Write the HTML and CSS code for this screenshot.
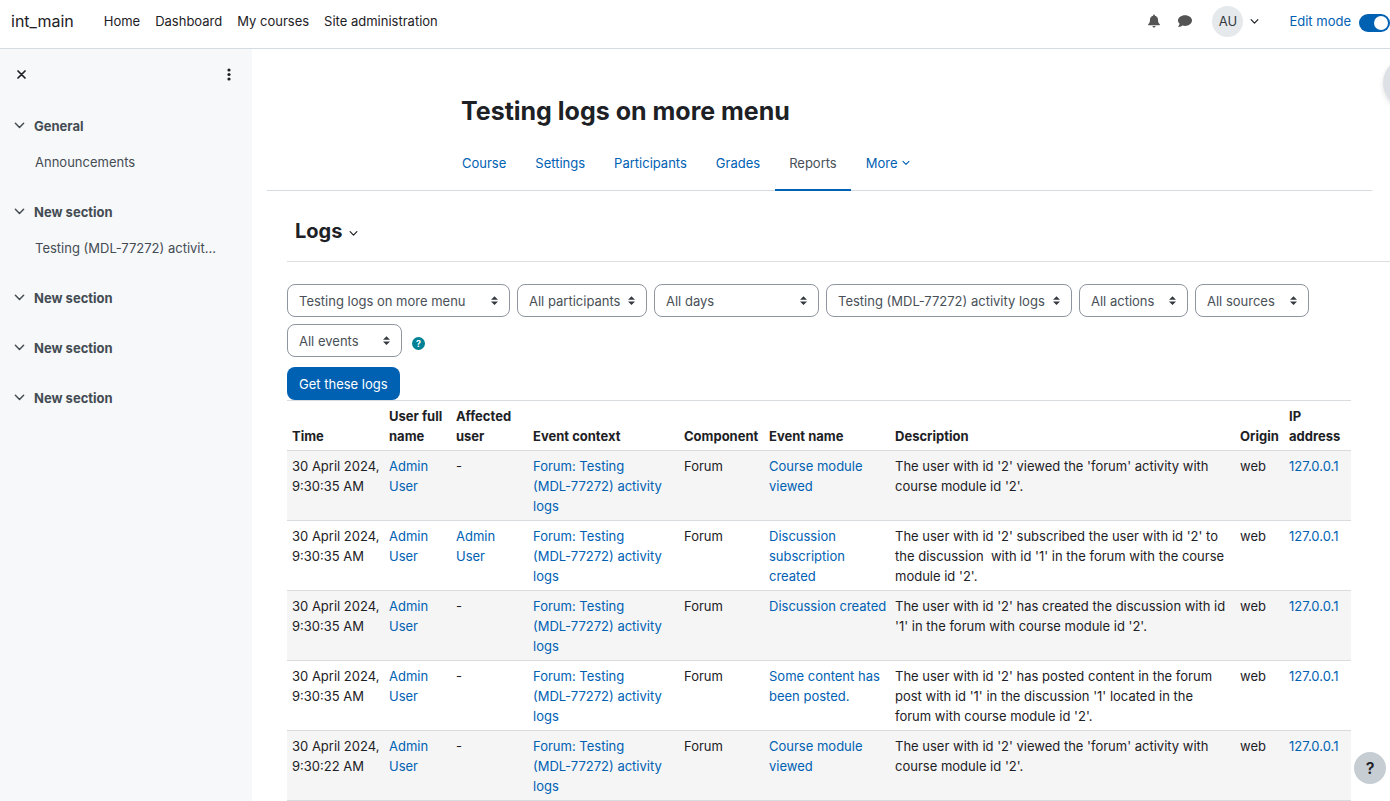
FILE: index.html
```html
<!DOCTYPE html>
<html lang="en">
<head>
<meta charset="utf-8">
<meta name="viewport" content="width=device-width, initial-scale=1">
<title>Testing logs on more menu: Logs</title>
<link rel="stylesheet" href="styles.css">
</head>
<body>
<svg class="sprite" aria-hidden="true">
  <symbol id="chevron" viewBox="0 0 12 12"><path d="M1.5 3.5 L6 8.2 L10.5 3.5" fill="none" stroke="currentColor" stroke-width="1.6" stroke-linecap="round" stroke-linejoin="round"/></symbol>
</svg>

<header class="navbar">
  <a class="brand" href="#">int_main</a>
  <nav class="primary-nav" aria-label="Site">
    <a href="#">Home</a>
    <a href="#">Dashboard</a>
    <a href="#">My courses</a>
    <a href="#">Site administration</a>
  </nav>
  <div class="user-tools">
    <button class="tool" type="button" aria-label="Notifications">
      <svg width="14" height="14" viewBox="0 0 14 14"><path d="M7 .6c.6 0 .9.4.9.9v.3c2 .4 3.1 2 3.1 4 0 2.400.7 3.500 1.700 4.300.5.5.2 1.200-.5 1.200H1.800c-.7 0-1-.7-.5-1.200C2.300 9.300 3 8.200 3 5.800c0-2 1.100-3.600 3.100-4v-.3c0-.5.3-.9.900-.9zM5.400 12h3.200c-.1.900-.8 1.500-1.600 1.500S5.500 12.900 5.400 12z" fill="currentColor"/></svg>
    </button>
    <button class="tool" type="button" aria-label="Messages">
      <svg width="14" height="14" viewBox="0 0 14 14"><path d="M7 1.200c3.900 0 7 2.400 7 5.400s-3.100 5.400-7 5.400c-.9 0-1.700-.1-2.500-.4-.9.700-2.300 1.400-4 1.400-.3 0-.4-.4-.2-.6.700-.8 1.200-1.700 1.300-2.600C.6 8.900 0 7.800 0 6.600 0 3.600 3.100 1.200 7 1.200z" fill="currentColor"/></svg>
    </button>
    <button class="user-menu" type="button" aria-label="User menu">
      <span class="avatar">AU</span>
      <svg class="chevron" width="9" height="9"><use href="#chevron"/></svg>
    </button>
    <label class="edit-mode">Edit mode
      <input class="switch" type="checkbox" role="switch" checked>
    </label>
  </div>
</header>

<div class="page">
  <aside class="drawer">
    <div class="drawer-head">
      <button class="plain" type="button" aria-label="Close course index">
        <svg width="9" height="9" viewBox="0 0 9 9"><path d="M1 1l7 7M8 1l-7 7" stroke="currentColor" stroke-width="1.700" stroke-linecap="round"/></svg>
      </button>
      <button class="plain" type="button" aria-label="Course index options">
        <svg width="4" height="13" viewBox="0 0 4 13"><circle cx="2" cy="2" r="1.600" fill="currentColor"/><circle cx="2" cy="6.500" r="1.600" fill="currentColor"/><circle cx="2" cy="11" r="1.600" fill="currentColor"/></svg>
      </button>
    </div>
    <nav class="course-index" aria-label="Course index">
      <section class="index-section">
        <button class="section-title" type="button"><svg class="chevron" width="11" height="11"><use href="#chevron"/></svg>General</button>
        <a class="section-item" href="#">Announcements</a>
      </section>
      <section class="index-section">
        <button class="section-title" type="button"><svg class="chevron" width="11" height="11"><use href="#chevron"/></svg>New section</button>
        <a class="section-item" href="#">Testing (MDL-77272) activit...</a>
      </section>
      <section class="index-section">
        <button class="section-title" type="button"><svg class="chevron" width="11" height="11"><use href="#chevron"/></svg>New section</button>
      </section>
      <section class="index-section">
        <button class="section-title" type="button"><svg class="chevron" width="11" height="11"><use href="#chevron"/></svg>New section</button>
      </section>
      <section class="index-section">
        <button class="section-title" type="button"><svg class="chevron" width="11" height="11"><use href="#chevron"/></svg>New section</button>
      </section>
    </nav>
  </aside>

  <main class="content">
    <div class="course-head">
      <h1>Testing logs on more menu</h1>
      <nav class="tabs" aria-label="Course">
        <a href="#">Course</a>
        <a href="#">Settings</a>
        <a href="#">Participants</a>
        <a href="#">Grades</a>
        <a class="active" href="#" aria-current="page">Reports</a>
        <a href="#">More <svg class="chevron" width="8" height="8"><use href="#chevron"/></svg></a>
      </nav>
    </div>

    <div class="report-head">
      <button class="report-title" type="button">Logs <svg class="chevron" width="9" height="9"><use href="#chevron"/></svg></button>
    </div>

    <form class="filters">
      <div class="filter-row">
        <select class="f-course" aria-label="Select a course"><option>Testing logs on more menu</option></select>
        <select class="f-user" aria-label="Participants"><option>All participants</option></select>
        <select class="f-day" aria-label="Days"><option>All days</option></select>
        <select class="f-activity" aria-label="Activities"><option>Testing (MDL-77272) activity logs</option></select>
        <select class="f-action" aria-label="Actions"><option>All actions</option></select>
        <select class="f-source" aria-label="Sources"><option>All sources</option></select>
        <select class="f-event" aria-label="Events"><option>All events</option></select>
        <button class="help" type="button" aria-label="Help with events">?</button>
      </div>
      <button class="submit" type="button">Get these logs</button>
    </form>

    <table class="logs">
      <colgroup>
        <col class="c-time"><col class="c-user"><col class="c-affected"><col class="c-context"><col class="c-component"><col class="c-event"><col><col class="c-origin"><col class="c-ip">
      </colgroup>
      <thead>
        <tr><th>Time</th><th>User full name</th><th>Affected user</th><th>Event context</th><th>Component</th><th>Event name</th><th>Description</th><th>Origin</th><th>IP address</th></tr>
      </thead>
      <tbody>
        <tr>
          <td>30 April 2024, 9:30:35 AM</td><td><a href="#">Admin User</a></td><td>-</td><td><a href="#">Forum: Testing <span class="issue">(MDL-77272)</span> activity logs</a></td><td>Forum</td><td><a href="#">Course module viewed</a></td>
          <td class="description">The user with id '2' viewed the 'forum' activity with course module id '2'.</td><td>web</td><td><a href="#">127.0.0.1</a></td>
        </tr>
        <tr>
          <td>30 April 2024, 9:30:35 AM</td><td><a href="#">Admin User</a></td><td><a href="#">Admin User</a></td><td><a href="#">Forum: Testing <span class="issue">(MDL-77272)</span> activity logs</a></td><td>Forum</td><td><a href="#">Discussion subscription created</a></td>
          <td class="description">The user with id '2' subscribed the user with id '2' to the discussion&nbsp; with id '1' in the forum with the course module id '2'.</td><td>web</td><td><a href="#">127.0.0.1</a></td>
        </tr>
        <tr>
          <td>30 April 2024, 9:30:35 AM</td><td><a href="#">Admin User</a></td><td>-</td><td><a href="#">Forum: Testing <span class="issue">(MDL-77272)</span> activity logs</a></td><td>Forum</td><td><a href="#">Discussion created</a></td>
          <td class="description">The user with id '2' has created the discussion with id '1' in the forum with course module id '2'.</td><td>web</td><td><a href="#">127.0.0.1</a></td>
        </tr>
        <tr>
          <td>30 April 2024, 9:30:35 AM</td><td><a href="#">Admin User</a></td><td>-</td><td><a href="#">Forum: Testing <span class="issue">(MDL-77272)</span> activity logs</a></td><td>Forum</td><td><a href="#">Some content has been posted.</a></td>
          <td class="description">The user with id '2' has posted content in the forum post with id '1' in the discussion '1' located in the forum with course module id '2'.</td><td>web</td><td><a href="#">127.0.0.1</a></td>
        </tr>
        <tr>
          <td>30 April 2024, 9:30:22 AM</td><td><a href="#">Admin User</a></td><td>-</td><td><a href="#">Forum: Testing <span class="issue">(MDL-77272)</span> activity logs</a></td><td>Forum</td><td><a href="#">Course module viewed</a></td>
          <td class="description">The user with id '2' viewed the 'forum' activity with course module id '2'.</td><td>web</td><td><a href="#">127.0.0.1</a></td>
        </tr>
      </tbody>
    </table>
  </main>
</div>

<button class="block-toggle" type="button" aria-label="Open block drawer"></button>
<button class="page-help" type="button" aria-label="Page help">?</button>
</body>
</html>
```
FILE: styles.css
```css
* { box-sizing: border-box; }

body {
  margin: 0;
  overflow-x: hidden;
  background: #fff;
  color: #1d2125;
  font: 13px/20px Inter, "Liberation Sans", sans-serif;
}

a { color: #0061b3; text-decoration: none; }
button, select { font: inherit; color: inherit; }
button { border: 0; padding: 0; background: none; cursor: pointer; }
svg { display: block; }
.sprite { position: absolute; width: 0; height: 0; }
.chevron { flex: none; }

/* Top bar */
.navbar {
  display: flex;
  align-items: center;
  height: 49px;
  padding: 0 0 6px 11px;
  border-bottom: 1px solid #d5dce1;
}
.brand { color: #1d2125; font-size: 16px; }
.primary-nav { display: flex; gap: 15px; margin-left: 30px; }
.primary-nav a { color: #1d2125; }
.user-tools { display: flex; align-items: center; margin-left: auto; }
.tool { margin-right: 17px; color: #545454; }
.user-menu { display: flex; align-items: center; gap: 7px; margin-left: 3px; }
.avatar {
  width: 31px;
  height: 31px;
  border-radius: 50%;
  background: #e5e9ec;
  color: #343a40;
  line-height: 31px;
  text-align: center;
}
.edit-mode { display: flex; align-items: center; gap: 8px; margin-left: 30px; color: #0061b3; }
.switch {
  appearance: none;
  display: flex;
  justify-content: flex-end;
  width: 31px;
  height: 18px;
  margin: 3px 0 0;
  padding: 2px;
  border-radius: 9px;
  background: #0061b3;
}
.switch::before { content: ""; width: 14px; height: 14px; border-radius: 50%; background: #fff; }

/* Page columns */
.page { display: flex; min-height: calc(100vh - 49px); }
.drawer { flex: none; width: 252px; background: #f7f8fa; color: #444c53; }
.content { flex: 1; min-width: 0; padding-left: 15px; }

/* Course index */
.drawer-head {
  display: flex;
  align-items: center;
  justify-content: space-between;
  height: 50px;
  padding: 0 21px 0 17px;
  color: #1d2125;
}
.course-index { padding: 8px 0 0 14px; }
.index-section { margin-bottom: 13px; }
.section-title { display: flex; align-items: center; gap: 9px; height: 37px; font-weight: 700; }
.section-item {
  display: block;
  width: 190px;
  padding: 8px 0;
  margin-left: 21px;
  overflow: hidden;
  color: #444c53;
  text-overflow: ellipsis;
  white-space: nowrap;
}

/* Course heading and tabs */
.course-head { margin-right: 18px; padding: 46px 0 0 181px; border-bottom: 1px solid #d5dce1; }
h1 { margin: 0 0 9px 13px; font-size: 25px; line-height: 32px; font-weight: 700; }
.tabs { display: flex; gap: 1px; margin-bottom: -1px; }
.tabs a { display: flex; align-items: center; gap: 4px; height: 55px; padding: 0 14px; border-bottom: 2px solid transparent; }
.tabs .active { border-color: #0061b3; color: #495057; }

/* Report heading */
.report-head { margin-left: 20px; padding: 24px 8px 14px; border-bottom: 1px solid #dcdfe1; }
.report-title { display: flex; align-items: center; gap: 7px; height: 32px; font-size: 20px; font-weight: 700; }
.report-title .chevron { margin-top: 4px; }

/* Filters */
.filters { margin: 22px 39px 0 20px; }
.filter-row { display: flex; flex-wrap: wrap; align-items: center; gap: 7px; margin-bottom: 10px; }
select {
  appearance: none;
  height: 33px;
  padding: 0 0 0 11px;
  border: 1px solid #8f959e;
  border-radius: 8px;
  background: #fff url("data:image/svg+xml,%3Csvg xmlns='http://www.w3.org/2000/svg' viewBox='0 0 4 5'%3E%3Cpath fill='%23343a40' d='M2 0L0 2h4zm0 5L0 3h4z'/%3E%3C/svg%3E") no-repeat right 11px top 11px / 7px 9px;
  color: #495057;
}
.f-course { width: 223px; }
.f-user { width: 130px; }
.f-day { width: 165px; }
.f-activity { width: 246px; }
.f-action { width: 109px; }
.f-source { width: 114px; }
.f-event { width: 115px; }
.help {
  width: 13px;
  height: 13px;
  margin: 6px 0 0 3px;
  border-radius: 50%;
  background: #008196;
  color: #fff;
  font-size: 9px;
  font-weight: 700;
  line-height: 13px;
}
.submit {
  display: block;
  height: 33px;
  padding: 0 12px;
  border-radius: 8px;
  background: #0061b3;
  color: #fff;
}

/* Log table */
.logs { width: calc(100% - 59px); margin-left: 20px; table-layout: fixed; border-collapse: separate; border-spacing: 0; }
.logs th, .logs td { padding: 5px 2px 4px 5px; border-top: 1px solid #d8dcdf; text-align: left; vertical-align: top; }
.logs th { font-weight: 700; vertical-align: bottom; }
.logs .description { padding-right: 8px; }
.logs tbody tr:nth-child(odd) { background: #f5f5f5; }
.logs tbody tr:last-child td { border-bottom: 1px solid #d8dcdf; }
.issue { white-space: nowrap; }
.c-time { width: 97px; }
.c-user { width: 67px; }
.c-affected { width: 77px; }
.c-context { width: 151px; }
.c-component { width: 85px; }
.c-event { width: 126px; }
.c-origin { width: 49px; }
.c-ip { width: 67px; }

/* Floating buttons */
.block-toggle {
  position: fixed;
  top: 58px;
  right: -43px;
  width: 50px;
  height: 50px;
  border-radius: 50%;
  background: #dde1e5;
  box-shadow: 0 2px 5px rgba(0, 0, 0, .12);
}
.page-help {
  position: fixed;
  right: 4px;
  bottom: 17px;
  width: 32px;
  height: 32px;
  border-radius: 50%;
  background: #c6cdd3;
  font-size: 16px;
  font-weight: 600;
}
```
